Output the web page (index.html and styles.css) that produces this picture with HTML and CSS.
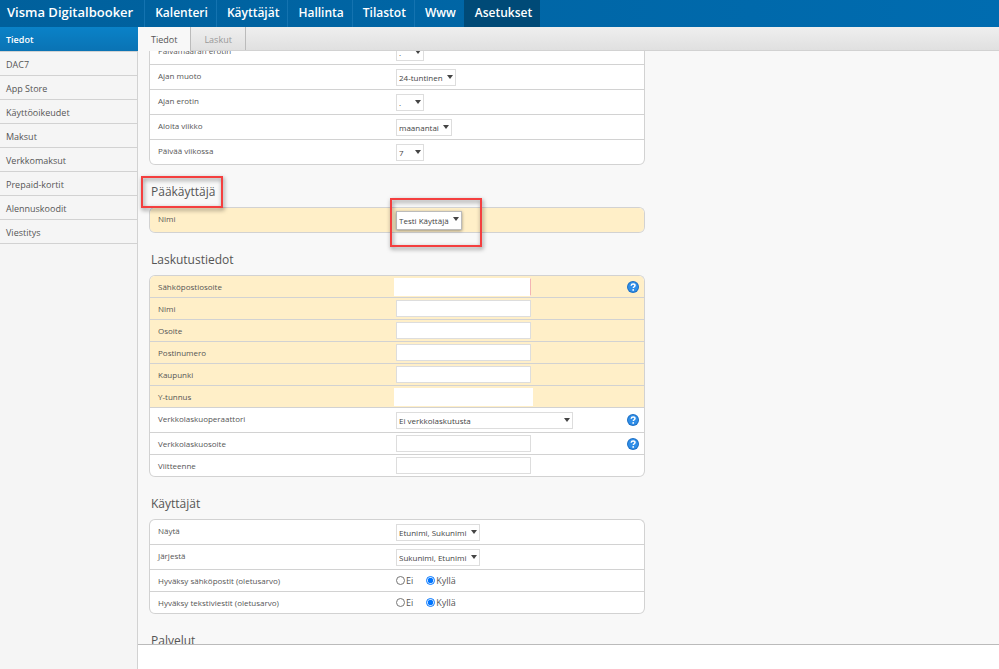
FILE: index.html
```html
<!DOCTYPE html>
<html lang="fi">
<head>
	<title>Visma Digitalbooker</title>
	<meta charset="UTF-8">
	<link rel="stylesheet" href="styles.css">
</head>
<body>
	<header class="topbar">
		<a class="brand" href="#">Visma Digitalbooker</a>
		<nav class="main-nav">
			<a href="#">Kalenteri</a>
			<a href="#">Käyttäjät</a>
			<a href="#">Hallinta</a>
			<a href="#">Tilastot</a>
			<a href="#">Www</a>
			<a href="#" class="active">Asetukset</a>
		</nav>
	</header>

	<div class="layout">
		<nav class="sidebar">
			<a href="#" class="active">Tiedot</a>
			<a href="#">DAC7</a>
			<a href="#">App Store</a>
			<a href="#">Käyttöoikeudet</a>
			<a href="#">Maksut</a>
			<a href="#">Verkkomaksut</a>
			<a href="#">Prepaid-kortit</a>
			<a href="#">Alennuskoodit</a>
			<a href="#">Viestitys</a>
		</nav>

		<main class="main">
			<div class="tabs">
				<a href="#" class="tab active">Tiedot</a>
				<a href="#" class="tab">Laskut</a>
			</div>

			<form class="content" id="content">
				<div class="card">
					<div class="row tall">
						<label for="dateSep">Päivämäärän erotin</label>
						<span class="select"><select id="dateSep"><option>.</option></select></span>
					</div>
					<div class="row tall">
						<label for="timeFormat">Ajan muoto</label>
						<span class="select"><select id="timeFormat"><option>24-tuntinen</option></select></span>
					</div>
					<div class="row tall">
						<label for="timeSep">Ajan erotin</label>
						<span class="select"><select id="timeSep"><option>.</option></select></span>
					</div>
					<div class="row tall">
						<label for="weekStart">Aloita viikko</label>
						<span class="select"><select id="weekStart"><option>maanantai</option></select></span>
					</div>
					<div class="row tall">
						<label for="weekDays">Päivää viikossa</label>
						<span class="select"><select id="weekDays"><option>7</option></select></span>
					</div>
				</div>

				<h2><span class="marked">Pääkäyttäjä</span></h2>
				<div class="card">
					<div class="row tall required">
						<label for="admin">Nimi</label>
						<span class="select raised marked-wide"><select id="admin"><option>Testi Käyttäjä</option></select></span>
					</div>
				</div>

				<h2>Laskutustiedot</h2>
				<div class="card">
					<div class="row required">
						<label for="email">Sähköpostiosoite</label>
						<input type="text" id="email" class="plain invalid">
						<button type="button" class="help" aria-label="Ohje">
							<svg viewBox="0 0 12 12"><circle cx="6" cy="6" r="6" fill="#1c6fc4"/><circle cx="6" cy="6" r="5" fill="#2f8ee8"/><path d="M4.2 4.7C4.3 3.5 5 3 6.1 3c1.100 0 1.900.6 1.900 1.500C8 5.700 6.300 5.800 6.300 7" fill="none" stroke="#fff" stroke-width="1.500"/><circle cx="6.200" cy="8.900" r=".9" fill="#fff"/></svg>
						</button>
					</div>
					<div class="row required">
						<label for="name">Nimi</label>
						<input type="text" id="name">
					</div>
					<div class="row required">
						<label for="address">Osoite</label>
						<input type="text" id="address">
					</div>
					<div class="row required">
						<label for="zip">Postinumero</label>
						<input type="text" id="zip">
					</div>
					<div class="row required">
						<label for="city">Kaupunki</label>
						<input type="text" id="city">
					</div>
					<div class="row required">
						<label for="businessId">Y-tunnus</label>
						<input type="text" id="businessId" class="plain">
					</div>
					<div class="row tall">
						<label for="operator">Verkkolaskuoperaattori</label>
						<span class="select wide"><select id="operator"><option>Ei verkkolaskutusta</option></select></span>
						<button type="button" class="help" aria-label="Ohje">
							<svg viewBox="0 0 12 12"><circle cx="6" cy="6" r="6" fill="#1c6fc4"/><circle cx="6" cy="6" r="5" fill="#2f8ee8"/><path d="M4.2 4.7C4.3 3.5 5 3 6.1 3c1.100 0 1.900.6 1.900 1.500C8 5.700 6.300 5.800 6.300 7" fill="none" stroke="#fff" stroke-width="1.500"/><circle cx="6.200" cy="8.900" r=".9" fill="#fff"/></svg>
						</button>
					</div>
					<div class="row">
						<label for="invoiceAddress">Verkkolaskuosoite</label>
						<input type="text" id="invoiceAddress">
						<button type="button" class="help" aria-label="Ohje">
							<svg viewBox="0 0 12 12"><circle cx="6" cy="6" r="6" fill="#1c6fc4"/><circle cx="6" cy="6" r="5" fill="#2f8ee8"/><path d="M4.2 4.7C4.3 3.5 5 3 6.1 3c1.100 0 1.900.6 1.900 1.500C8 5.700 6.300 5.800 6.300 7" fill="none" stroke="#fff" stroke-width="1.500"/><circle cx="6.200" cy="8.900" r=".9" fill="#fff"/></svg>
						</button>
					</div>
					<div class="row">
						<label for="reference">Viitteenne</label>
						<input type="text" id="reference">
					</div>
				</div>

				<h2>Käyttäjät</h2>
				<div class="card">
					<div class="row tall">
						<label for="show">Näytä</label>
						<span class="select"><select id="show"><option>Etunimi, Sukunimi</option></select></span>
					</div>
					<div class="row tall">
						<label for="order">Järjestä</label>
						<span class="select"><select id="order"><option>Sukunimi, Etunimi</option></select></span>
					</div>
					<div class="row" role="radiogroup" aria-labelledby="emailsLabel">
						<span id="emailsLabel">Hyväksy sähköpostit (oletusarvo)</span>
						<span class="radios">
							<label><input type="radio" name="emails">Ei</label>
							<label><input type="radio" name="emails" checked>Kyllä</label>
						</span>
					</div>
					<div class="row" role="radiogroup" aria-labelledby="smsLabel">
						<span id="smsLabel">Hyväksy tekstiviestit (oletusarvo)</span>
						<span class="radios">
							<label><input type="radio" name="sms">Ei</label>
							<label><input type="radio" name="sms" checked>Kyllä</label>
						</span>
					</div>
				</div>

				<h2>Palvelut</h2>
			</form>

			<footer class="footer"></footer>
		</main>
	</div>

	<script src="page.js"></script>
</body>
</html>
```
FILE: styles.css
```css
:root {
	--active-color: #004a77;
	--bg-color: #f8f8f8;
	--text-color: #555;
	--border-color: #d2d2d2;
	--required-bg: #ffefc8;
	--mark-color: #f43f3f;
}

* {
	box-sizing: border-box;
}

body {
	margin: 0;
	height: 100vh;
	display: flex;
	flex-direction: column;
	overflow: hidden;
	font-family: "Open Sans", sans-serif;
	font-size: 9px;
	line-height: 12px;
	background: var(--bg-color);
	color: var(--text-color);
}

a {
	color: inherit;
	text-decoration: none;
}

.topbar {
	display: flex;
	flex: none;
	height: 27px;
	background: linear-gradient(to right, #00609c, #006cb0);
	color: #fff;
	font-size: 13px;
	font-weight: 600;
	line-height: 25px;
}

.brand {
	padding: 0 11px 0 7px;
}

.main-nav {
	display: flex;
	font-size: 12px;
}

.main-nav a {
	padding: 0 8px 0 10px;
	border-left: 1px solid #1473b0;
}

.main-nav a.active {
	background: var(--active-color);
	border-left-color: var(--active-color);
}

.layout {
	display: flex;
	flex: 1;
	min-height: 0;
}

.sidebar {
	flex: none;
	width: 138px;
	background: #f5f5f5;
	border-right: 1px solid var(--border-color);
}

.sidebar a {
	display: block;
	height: 24px;
	padding: 0 6px;
	line-height: 26px;
	border-bottom: 1px solid var(--border-color);
}

.sidebar a.active {
	height: 25px;
	background: linear-gradient(#0a82c8, #0a73b4);
	border-bottom-color: var(--border-color);
	color: #fff;
	font-weight: 600;
	margin-right: -1px;
}

.main {
	flex: 1;
	min-width: 0;
	display: flex;
	flex-direction: column;
}

.tabs {
	display: flex;
	flex: none;
	height: 24px;
	background: linear-gradient(#efefef, #e0e0e0);
	border-bottom: 1px solid var(--border-color);
}

.tab {
	padding: 0 13px;
	line-height: 25px;
	color: #999;
	border-right: 1px solid #bbb;
}

.tab.active {
	background: var(--bg-color);
	color: var(--text-color);
	margin-bottom: -1px;
}

.content {
	flex: 1;
	min-height: 0;
	padding: 10px 11px 60px;
	overflow-y: auto;
	scrollbar-width: none;
}

h2 {
	max-width: 496px;
	margin: 0;
	padding: 17px 2px 5px;
	font-size: 12px;
	font-weight: 400;
	line-height: 20px;
}

.card {
	max-width: 496px;
	border: 1px solid var(--border-color);
	border-bottom: 0;
	border-radius: 6px;
	background: #fff;
	font-size: 8px;
}

.row {
	display: grid;
	grid-template-columns: 238px 1fr auto;
	align-items: center;
	justify-items: start;
	height: 22px;
	padding: 0 5px 0 8px;
	border-bottom: 1px solid var(--border-color);
}

.row.tall {
	height: 25px;
}

.row.tall > label {
	padding-bottom: 2px;
}

.row.required {
	background: var(--required-bg);
	background-clip: padding-box;
}

.row:first-child {
	border-top-left-radius: 5px;
	border-top-right-radius: 5px;
}

.row:last-child {
	border-bottom-left-radius: 5px;
	border-bottom-right-radius: 5px;
}

input[type="text"] {
	width: 135px;
	height: 17px;
	padding: 0 3px;
	border: 1px solid #ddd;
	background: #fff;
	font: inherit;
}

input[type="text"].plain {
	width: 139px;
	height: 18px;
	margin-left: -2px;
	border-color: #fff;
}

input[type="text"].invalid {
	width: 137px;
	border-right-color: #f3b4b4;
}

.select {
	position: relative;
	display: flex;
}

.select::after {
	content: "";
	position: absolute;
	right: 3px;
	top: 6px;
	border: 3px solid transparent;
	border-top: 4px solid #444;
	border-bottom: 0;
	pointer-events: none;
}

select {
	appearance: none;
	width: 100%;
	min-width: 28px;
	height: 17px;
	margin: 0;
	padding: 2px 12px 0 2px;
	border: 1px solid #ddd;
	border-radius: 0;
	background: #fff;
	color: #444;
	font: inherit;
	line-height: 12px;
}

.select.wide {
	width: 177px;
}

.select.raised select {
	height: 19px;
	border-color: #bbb;
	box-shadow: 0 1px 3px rgba(0, 0, 0, 0.4);
}

.help {
	width: 12px;
	height: 12px;
	padding: 0;
	border: none;
	background: none;
	cursor: pointer;
}

.help svg {
	display: block;
	width: 12px;
	height: 12px;
}

.radios {
	display: flex;
	gap: 13px;
	font-size: 9px;
}

.radios label {
	display: flex;
	align-items: center;
	gap: 1px;
}

.radios input {
	width: 9px;
	height: 9px;
	margin: 0;
}

/* red highlight frames */
.marked,
.marked-wide {
	position: relative;
}

.marked::before,
.marked-wide::before {
	content: "";
	position: absolute;
	z-index: 1;
	border: 2px solid var(--mark-color);
	filter: drop-shadow(1px 2px 2px rgba(0, 0, 0, 0.5));
	pointer-events: none;
}

.marked::before {
	inset: -7px -8px -8px -10px;
}

.marked-wide::before {
	inset: -13px -20px -17px -6px;
}

.footer {
	flex: none;
	height: 25px;
	background: #fff;
	border-top: 1px solid #bbb;
}
```
FILE: page.js
```js
document.getElementById('content').scrollTop = 22;
```
